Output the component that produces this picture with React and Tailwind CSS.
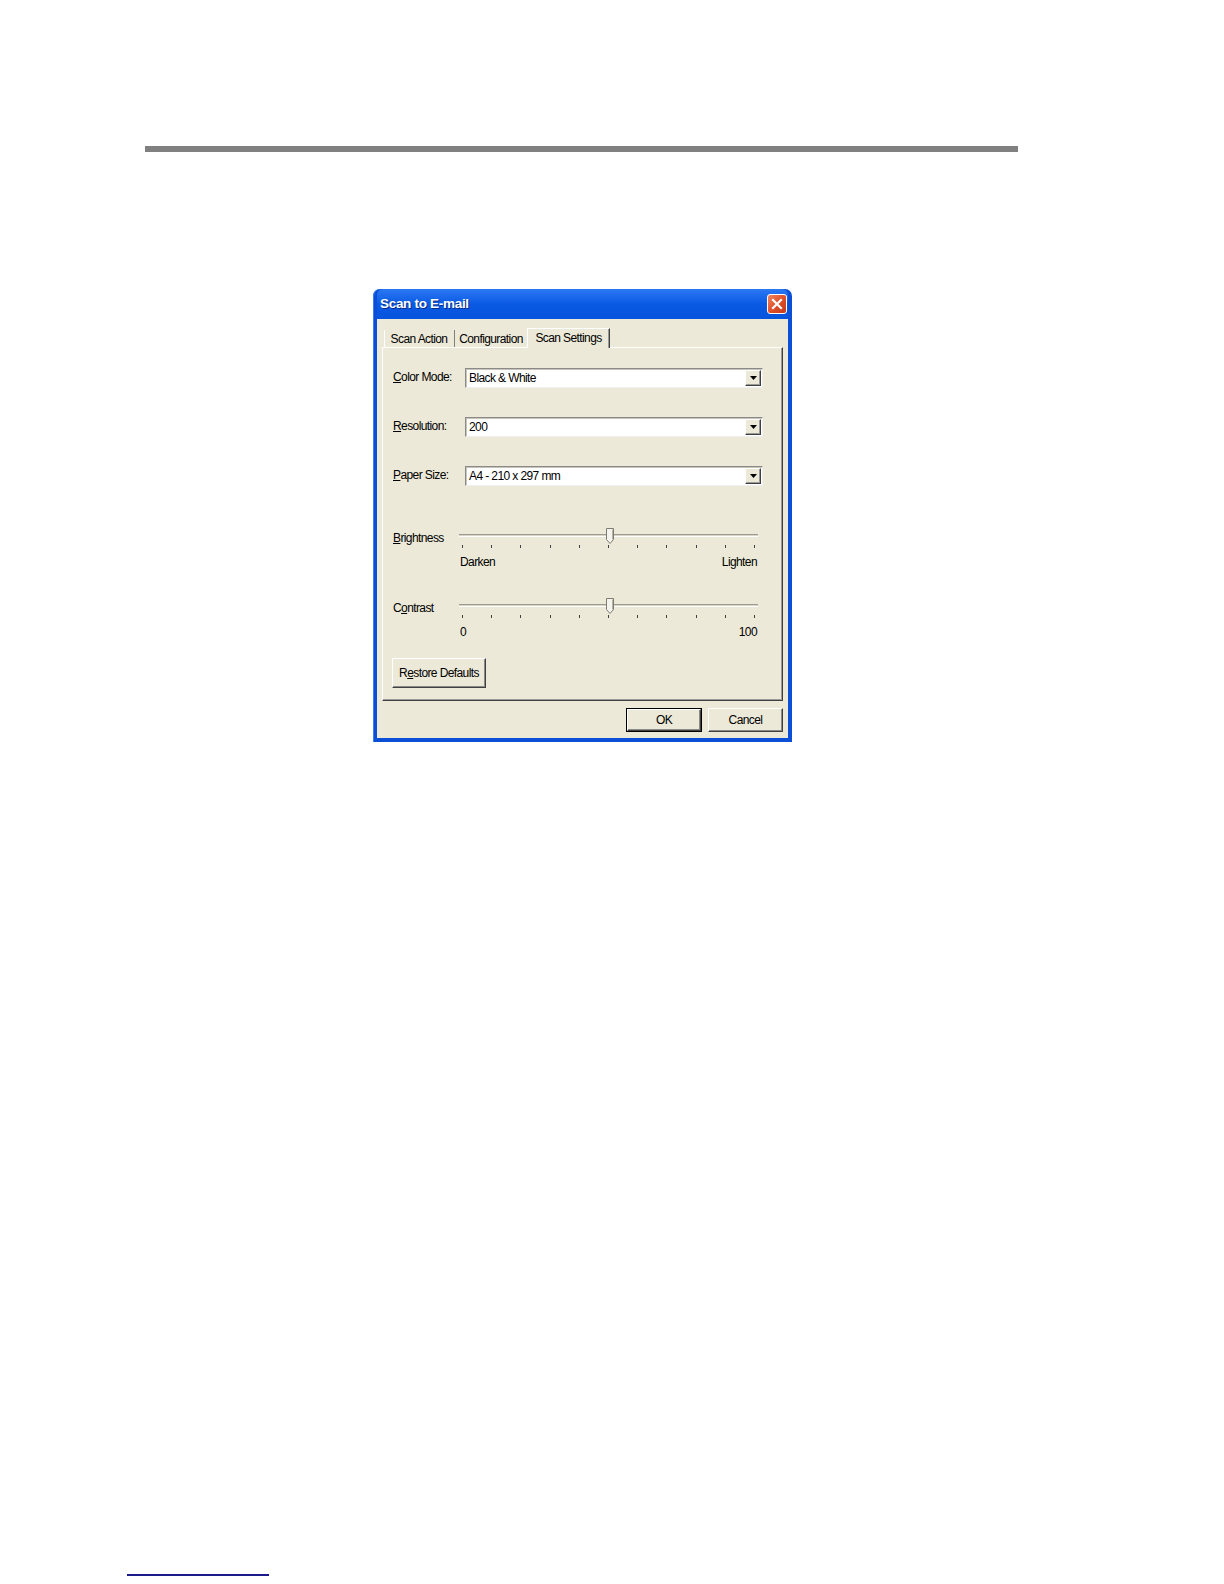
const font = "font-['Liberation_Sans',Arial,sans-serif]";
const txt = "text-[12px] tracking-[-0.6px] leading-[14px]";

const Tick = () => <div className="w-[1px] h-[3px] bg-[#404040]" />;

const Select = ({ value }) => (
  <div className="flex items-center w-[298px] h-[20px] bg-white border border-t-[#8a8a8a] border-l-[#8a8a8a] border-r-[#f0f0f0] border-b-[#f0f0f0] shadow-[inset_1px_1px_0_#c8c5b8]">
    <span className={`flex-1 pl-[3px] text-black ${txt}`}>{value}</span>
    <div className="w-[16px] h-[16px] mr-[1px] flex items-center justify-center bg-[#ece9d8] border border-t-white border-l-white border-r-[#404040] border-b-[#404040] shadow-[inset_-1px_-1px_0_#9a9a9a]">
      <svg width="7" height="4" viewBox="0 0 7 4">
        <path d="M0 0h7L3.5 4z" fill="#000" />
      </svg>
    </div>
  </div>
);

const Slider = ({ label, left, right }) => (
  <div className="flex h-[42px]">
    <div className={`w-[66px] pt-[4px] ${txt}`}>{label}</div>
    <div className="w-[299px] flex flex-col">
      <div className="relative h-[17px]">
        <div className="absolute left-0 right-0 top-[7px] h-[3px] bg-[#d8d5c8] border-t border-[#9d9b8f] border-b border-b-white" />
        <svg className="absolute left-[146px] top-[1px]" width="10" height="16" viewBox="0 0 10 16">
          <path d="M1.5 0.5h7v11l-3.5 4l-3.5-4z" fill="#f4f3ee" stroke="#7e7c70" />
          <path d="M7.5 1.5v10" stroke="#b8b5a6" />
        </svg>
      </div>
      <div className="flex justify-between pl-[3px] pr-[3px] mt-[1px]">
        {Array.from({ length: 11 }).map((_, i) => (
          <Tick key={i} />
        ))}
      </div>
      <div className={`flex justify-between pl-[1px] pr-[1px] mt-[7px] ${txt}`}>
        <span>{left}</span>
        <span>{right}</span>
      </div>
    </div>
  </div>
);

const Button = ({ children, className = "" }) => (
  <div
    className={`flex items-center justify-center bg-[#ece9d8] border border-t-white border-l-white border-r-[#404040] border-b-[#404040] shadow-[inset_-1px_-1px_0_#8a8a8a] ${txt} ${className}`}
  >
    {children}
  </div>
);

export default function App() {
  return (
    <div className={`w-[1224px] h-[1584px] bg-white flex flex-col overflow-hidden ${font}`}>
      <div className="ml-[145px] mt-[146px] w-[873px] h-[6px] bg-[#808080]" />

      {/* dialog */}
      <div className="ml-[373px] mt-[137px] w-[419px] h-[453px] flex flex-col rounded-t-[7px] bg-[#0a4fd6] px-[4px] pb-[4px] shadow-[inset_1px_0_0_#3b7cf0]">
        <div className="h-[30px] flex items-center justify-between pl-[3px] pr-[1px] rounded-t-[6px] bg-gradient-to-b from-[#2a78f2] via-[#0a5ae4] to-[#0753dc]">
          <span className="text-white font-bold text-[13.5px] tracking-[-0.3px] leading-[16px] [text-shadow:1px_1px_0_#0a2a8a]">
            Scan to E-mail
          </span>
          <div className="w-[20px] h-[20px] rounded-[3px] border border-white bg-gradient-to-br from-[#f0845e] via-[#e0502a] to-[#c43a1a] flex items-center justify-center">
            <svg width="12" height="12" viewBox="0 0 12 12">
              <path d="M2 2l8 8M10 2l-8 8" stroke="#fff" strokeWidth="2.2" strokeLinecap="square" />
            </svg>
          </div>
        </div>

        <div className="flex-1 bg-[#ece9d8] px-[5px] pt-[9px] pb-[6px] flex flex-col">
          {/* tabs */}
          <div className={`h-[19px] flex items-end pl-[2px] ${txt}`}>
            <div className="w-[71px] h-[17px] flex items-center justify-center border-r border-[#808080] shadow-[inset_1px_0_0_#fff]">
              Scan Action
            </div>
            <div className="w-[72px] h-[17px] flex items-center justify-center">
              Configuration
            </div>
            <div className="relative z-10 w-[83px] h-[20px] mb-[-1px] pb-[2px] flex items-center justify-center bg-[#ece9d8] border-t border-l border-white border-r border-r-[#404040] shadow-[inset_-1px_0_0_#9a9a9a]">
              Scan Settings
            </div>
          </div>

          {/* panel */}
          <div className="w-[401px] h-[354px] border border-t-white border-l-white border-r-[#404040] border-b-[#404040] shadow-[inset_-1px_-1px_0_#9a9a9a] pl-[9px] pt-[20px] flex flex-col text-black">
            <div className="flex items-start">
              <div className={`w-[73px] pl-[1px] pt-[2px] ${txt}`}>
                <u>C</u>olor Mode:
              </div>
              <Select value="Black & White" />
            </div>
            <div className="flex items-start mt-[29px]">
              <div className={`w-[73px] pl-[1px] pt-[2px] ${txt}`}>
                <u>R</u>esolution:
              </div>
              <Select value="200" />
            </div>
            <div className="flex items-start mt-[29px]">
              <div className={`w-[73px] pl-[1px] pt-[2px] ${txt}`}>
                <u>P</u>aper Size:
              </div>
              <Select value="A4 - 210 x 297 mm" />
            </div>

            <div className="mt-[41px] pl-[1px]">
              <Slider
                label={
                  <>
                    <u>B</u>rightness
                  </>
                }
                left="Darken"
                right="Lighten"
              />
            </div>
            <div className="mt-[28px] pl-[1px]">
              <Slider
                label={
                  <>
                    C<u>o</u>ntrast
                  </>
                }
                left="0"
                right="100"
              />
            </div>

            <Button className="mt-[19px] w-[94px] h-[30px]">
              R<u>e</u>store Defaults
            </Button>
          </div>

          {/* bottom buttons */}
          <div className="flex justify-end gap-[6px] mt-[7px] text-black">
            <div className="border border-black">
              <Button className="w-[74px] h-[22px]">OK</Button>
            </div>
            <Button className="w-[75px] h-[24px]">Cancel</Button>
          </div>
        </div>
      </div>

      <div className="ml-[127px] mt-auto mb-[8px] w-[142px] h-[2px] bg-[#1a1a8c]" />
    </div>
  );
}
